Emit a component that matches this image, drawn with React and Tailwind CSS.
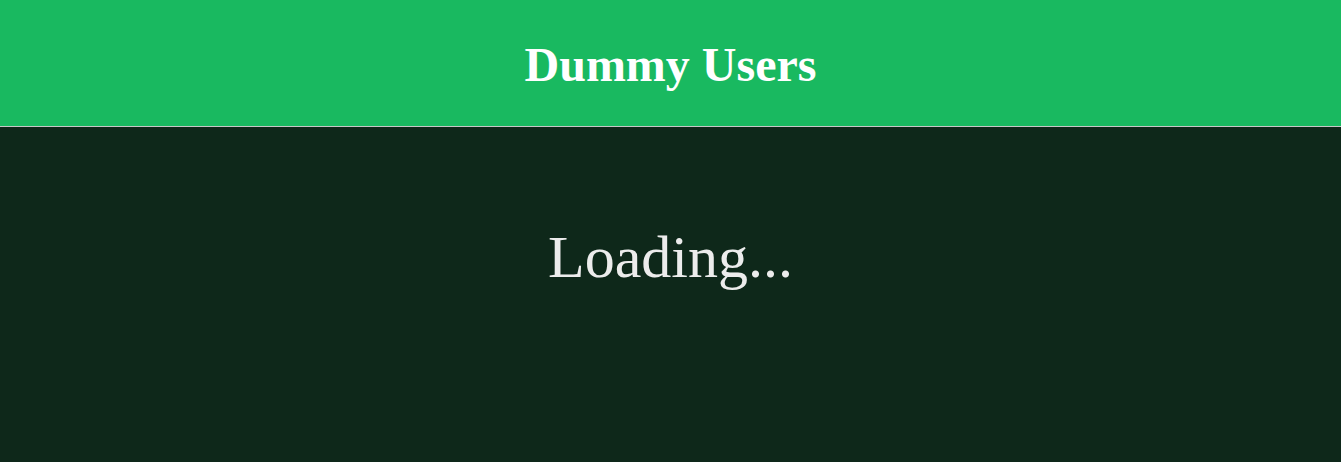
export default function App() {
  return (
    <div className="min-h-[462px] bg-[#0e281a]" style={{ fontFamily: '"Liberation Serif", "Times New Roman", serif' }}>
      <header className="h-[127px] bg-[#19b960] border-b border-[#c8c8c8] flex items-center justify-center pt-[4px]">
        <h1 className="text-[48px] font-bold text-white leading-[1.107]">Dummy Users</h1>
      </header>
      <main className="pt-[97px] flex justify-center">
        <p className="text-[60px] text-[#ececec] leading-[1.107]">Loading...</p>
      </main>
    </div>
  );
}
